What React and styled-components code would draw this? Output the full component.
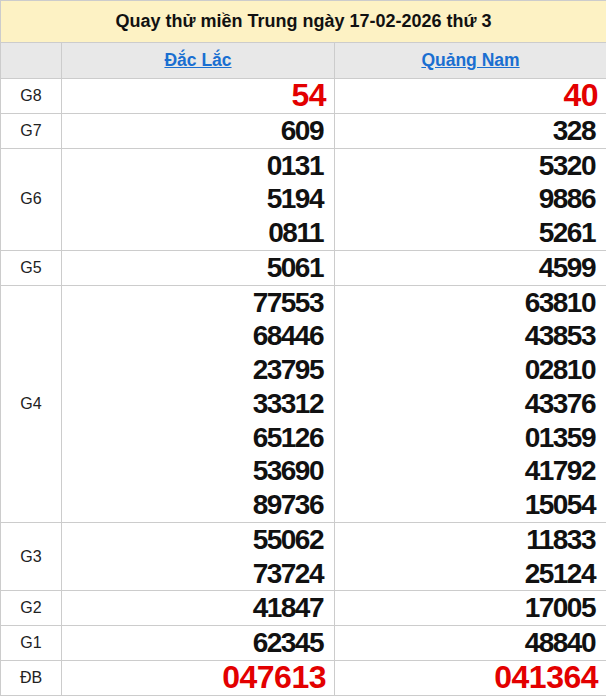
import styled, { createGlobalStyle } from "styled-components";

const GlobalStyle = createGlobalStyle`
  body {
    margin: 0;
    background: #ffffff;
    font-family: "Liberation Sans", Arial, sans-serif;
  }
`;

const Table = styled.table`
  width: 606px;
  border-collapse: collapse;
  table-layout: fixed;
`;

const TitleCell = styled.td`
  height: 41px;
  background: #fdf2c4;
  border: 1px solid #cccccc;
  text-align: center;
  font-size: 18px;
  font-weight: bold;
  color: #111111;
  padding: 0;
`;

const HeadCell = styled.th`
  height: 35px;
  background: #e8e8e8;
  border: 1px solid #cccccc;
  padding: 0;
  font-size: 17.5px;
  font-weight: bold;
  text-align: center;
`;

const HeadLink = styled.a`
  color: #1a6fd1;
  text-decoration: underline;
`;

const LabelCell = styled.td`
  border: 1px solid #cccccc;
  text-align: center;
  vertical-align: middle;
  font-size: 16px;
  color: #222222;
  padding: 0;
`;

const NumCell = styled.td`
  border: 1px solid #cccccc;
  text-align: right;
  padding: 0 ${(p) => (p.$red ? "8px" : "11px")} 0 0;
`;

const Num = styled.div`
  height: 33.76px;
  line-height: 33.76px;
  font-size: ${(p) => (p.$red ? "32px" : "28px")};
  letter-spacing: ${(p) => (p.$red ? "-0.5px" : "-1.5px")};
  font-weight: bold;
  color: ${(p) => (p.$red ? "#e30000" : "#111111")};
`;

const rows = [
  { label: "G8", red: true, a: ["54"], b: ["40"] },
  { label: "G7", a: ["609"], b: ["328"] },
  { label: "G6", a: ["0131", "5194", "0811"], b: ["5320", "9886", "5261"] },
  { label: "G5", a: ["5061"], b: ["4599"] },
  {
    label: "G4",
    a: ["77553", "68446", "23795", "33312", "65126", "53690", "89736"],
    b: ["63810", "43853", "02810", "43376", "01359", "41792", "15054"],
  },
  { label: "G3", a: ["55062", "73724"], b: ["11833", "25124"] },
  { label: "G2", a: ["41847"], b: ["17005"] },
  { label: "G1", a: ["62345"], b: ["48840"] },
  { label: "ĐB", red: true, a: ["047613"], b: ["041364"] },
];

export default function App() {
  return (
    <>
      <GlobalStyle />
      <Table>
        <colgroup>
          <col style={{ width: "61px" }} />
          <col style={{ width: "273px" }} />
          <col style={{ width: "272px" }} />
        </colgroup>
        <tbody>
          <tr>
            <TitleCell colSpan={3}>Quay thử miền Trung ngày 17-02-2026 thứ 3</TitleCell>
          </tr>
          <tr>
            <HeadCell />
            <HeadCell>
              <HeadLink href="#">Đắc Lắc</HeadLink>
            </HeadCell>
            <HeadCell>
              <HeadLink href="#">Quảng Nam</HeadLink>
            </HeadCell>
          </tr>
          {rows.map((r) => (
            <tr key={r.label}>
              <LabelCell>{r.label}</LabelCell>
              <NumCell $red={r.red}>
                {r.a.map((n, i) => (
                  <Num key={i} $red={r.red}>{n}</Num>
                ))}
              </NumCell>
              <NumCell $red={r.red}>
                {r.b.map((n, i) => (
                  <Num key={i} $red={r.red}>{n}</Num>
                ))}
              </NumCell>
            </tr>
          ))}
        </tbody>
      </Table>
    </>
  );
}
